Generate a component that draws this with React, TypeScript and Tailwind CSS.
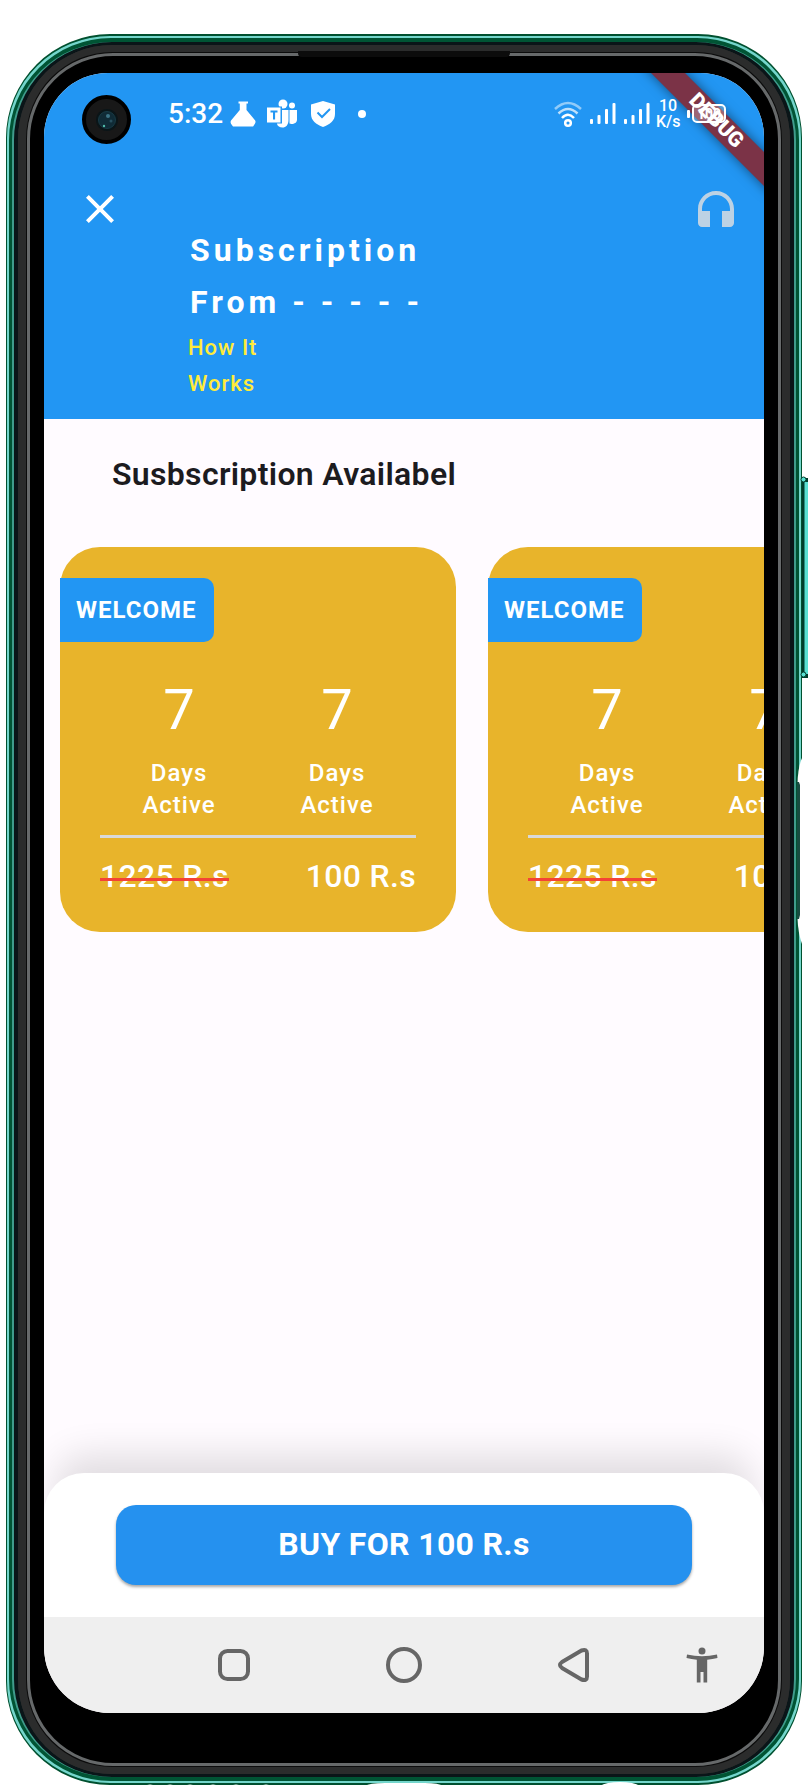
import React from "react";

function StatusBar() {
  return (
    <div className="relative z-10 flex h-[82px] shrink-0 items-center pl-[124px] pr-[37px] leading-none text-white">
      <span className="w-[62px] text-[28px] font-medium">5:32</span>
      <svg className="h-[26px] w-[26px]" viewBox="0 0 26 26" fill="currentColor" aria-hidden="true">
        <path d="M8.500 0.500h9.500v2h-1.500v6.500l8.700 10.500q.8 1.500-.3 3.200l-1.800 2.800H3l-2-2.800q-1-1.700 0-3.200L9.800 9V2.500H8.500z" />
      </svg>
      <svg className="ml-[11px] h-[30px] w-[30px]" viewBox="0 0 30 30" fill="currentColor" aria-hidden="true">
        <circle cx="16" cy="5" r="4.500" />
        <circle cx="25" cy="6.500" r="3" />
        <path d="M22.500 11H30v9.500c0 3-2.500 4.500-5.500 4.500q-1.300 0-2-.4z" />
        <path d="M11 11h10.500v10c0 5-2.800 7.500-6 7.500-3 0-4.800-1.200-5.500-3.500z" />
        <path d="M-.5 7.500h15.500v17H-.5z" fill="#2296f3" />
        <path d="M0 8.500h13.500v15H0z" />
        <path d="M3.500 11.500h7v2h-2.400v7H6v-7H3.500z" fill="#2296f3" />
      </svg>
      <svg className="ml-[13px] h-[28px] w-[26px]" viewBox="0 0 26 28" fill="currentColor" aria-hidden="true">
        <path d="M13 1 25 4.500V14c0 6.500-5 10.500-12 13C6 24.500 1 20.500 1 14V4.500z" />
        <path d="M7.500 12.500l4.500 4.500 8-8" fill="none" stroke="#2296f3" strokeWidth="2" />
      </svg>
      <span className="ml-[22px] h-2 w-2 rounded-full bg-white" />
      <div className="ml-auto flex items-center">
        <svg className="h-[28px] w-[28px]" viewBox="0 0 28 28" fill="none" stroke="currentColor" strokeWidth="2.500" aria-hidden="true">
          <path d="M1 9q13-12 26 0" opacity=".5" />
          <path d="M4.500 13.500q9.500-9 19 0" opacity=".7" />
          <path d="M8 18q6-6.500 12 0" />
          <circle cx="14" cy="23" r="2.800" />
        </svg>
        <Signal />
        <Signal />
        <div className="ml-[6px] w-[24px] text-center text-[16px] font-medium leading-4">
          10
          <br />
          K/s
        </div>
        <svg className="ml-[7px] h-[22px] w-[40px]" viewBox="0 0 40 22" aria-hidden="true">
          <rect x="0" y="7" width="3" height="8" rx="1" fill="white" />
          <rect x="6" y="2" width="32" height="17" rx="4" fill="rgba(255,255,255,.25)" stroke="white" strokeWidth="2" />
          <text x="22" y="16" textAnchor="middle" fontFamily="Roboto, sans-serif" fontSize="14" fontWeight="700" fill="white">
            100
          </text>
        </svg>
      </div>
    </div>
  );
}

function Signal() {
  return (
    <svg className="ml-[8px] h-[22px] w-[26px]" viewBox="0 0 26 22" fill="currentColor" aria-hidden="true">
      <rect x="0" y="16" width="3" height="5" rx="1" />
      <rect x="7.500" y="12" width="3" height="9" rx="1" />
      <rect x="15" y="6" width="3" height="15" rx="1" />
      <rect x="22.500" y="0" width="3" height="21" rx="1" />
    </svg>
  );
}

function Header() {
  return (
    <header className="h-[346px] shrink-0 bg-[#2296f3]">
      <StatusBar />
      <div className="flex items-start pt-[30px] pl-[32px] pr-[24px]">
        <button type="button" aria-label="Close" className="h-[48px] w-[48px] text-white">
          <svg viewBox="0 0 24 24" fill="currentColor" className="h-full w-full">
            <path d="M19 6.410 17.590 5 12 10.590 6.410 5 5 6.410 10.590 12 5 17.590 6.410 19 12 13.410 17.590 19 19 17.590 13.410 12z" />
          </svg>
        </button>
        <div className="ml-[64px] w-[250px] pt-[39px]">
          <h1 className="pl-[2px] text-[32px] font-bold leading-[52px] tracking-[4px] text-white">
            Subscription From&nbsp;-&nbsp;-&nbsp;-&nbsp;-&nbsp;-
          </h1>
          <a href="#how" className="mt-[2px] block w-[100px] text-[22px] font-medium leading-9 tracking-[1px] text-[#ffeb3b]">
            How It Works
          </a>
        </div>
        <button type="button" aria-label="Support" className="ml-auto h-[48px] w-[48px] text-[#bdd2e4]">
          <svg viewBox="0 0 24 24" fill="currentColor" className="h-full w-full">
            <path d="M12 3c-4.970 0-9 4.030-9 9v7c0 1.100.9 2 2 2h4v-8H5v-1c0-3.870 3.130-7 7-7s7 3.130 7 7v1h-4v8h4c1.100 0 2-.9 2-2v-7c0-4.970-4.030-9-9-9z" />
          </svg>
        </button>
      </div>
    </header>
  );
}

function Stat() {
  return (
    <div className="flex-1 text-center text-white">
      <div className="text-[56px] leading-[72px]">7</div>
      <div className="mt-[11px] text-[24px] font-medium leading-8 tracking-[1px]">
        Days
        <br />
        Active
      </div>
    </div>
  );
}

function PlanCard() {
  return (
    <article className="h-[385px] w-[396px] shrink-0 rounded-[40px] bg-[#e8b42b] pt-[31px]">
      <div className="flex h-[64px] w-[154px] items-center rounded-r-[10px] bg-[#2296f3] pl-[16px] text-[24px] font-bold tracking-[1px] text-white">
        WELCOME
      </div>
      <div className="mx-[40px] mt-[32px] flex border-b-[3px] border-[#d9d9d9] pb-[14px]">
        <Stat />
        <Stat />
      </div>
      <div className="mx-[40px] mt-[18px] flex justify-between text-[32px] font-medium leading-[40px] tracking-[0.01em] text-white">
        <s className="relative no-underline after:absolute after:inset-x-0 after:top-[22px] after:h-[3px] after:bg-[#f44336]">1225 R.s</s>
        <span>100 R.s</span>
      </div>
    </article>
  );
}

function NavBar() {
  return (
    <nav className="flex h-[96px] shrink-0 items-center justify-between bg-[#efefef] pl-[166px] pr-[38px] text-[#666666]">
      <button type="button" aria-label="Recent apps">
        <svg className="h-[48px] w-[48px]" viewBox="0 0 48 48" fill="none" stroke="currentColor" strokeWidth="4">
          <rect x="10" y="10" width="28" height="28" rx="7.500" />
        </svg>
      </button>
      <button type="button" aria-label="Home" className="ml-[74px]">
        <svg className="h-[48px] w-[48px]" viewBox="0 0 48 48" fill="none" stroke="currentColor" strokeWidth="4">
          <circle cx="24" cy="24" r="16" />
        </svg>
      </button>
      <button type="button" aria-label="Back" className="ml-[74px]">
        <svg className="h-[48px] w-[48px]" viewBox="0 0 48 48" fill="none" stroke="currentColor" strokeWidth="4" strokeLinejoin="round">
          <path d="M31.500 9.500 12 21q-4 3 0 6l19.500 11.500q5.500 2 5.500-3v-23q0-5-5.500-3z" />
        </svg>
      </button>
      <button type="button" aria-label="Accessibility" className="ml-[32px]">
        <svg className="h-[48px] w-[48px]" viewBox="0 0 48 48" fill="currentColor">
          <circle cx="24" cy="10" r="3.500" />
          <path d="M9 13.500q15 3.500 30 0l.5 3.500q-5 1.200-10.300 1.700V41.500h-3.700V31h-3v10.500h-3.700V18.700Q13.500 18.200 8.500 17z" />
        </svg>
      </button>
    </nav>
  );
}

function Screen() {
  return (
    <div className="relative flex min-w-0 flex-1 flex-col overflow-hidden rounded-t-[64px] rounded-b-[66px] bg-[#fffbff]">
      <Header />
      <main className="flex-1">
        <h2 className="pt-[35px] pl-[68px] text-[32px] font-semibold leading-[40px] tracking-[0.01em] text-[#1c1b1f]">
          Susbscription Availabel
        </h2>
        <div className="mt-[53px] flex gap-8 overflow-hidden pl-[16px]">
          <PlanCard />
          <PlanCard />
        </div>
      </main>
      <div className="h-[144px] shrink-0 rounded-t-[40px] bg-white px-[72px] pt-[32px] shadow-[0_-30px_36px_-12px_rgba(0,0,0,0.12)]">
        <button
          type="button"
          className="h-[80px] w-full rounded-[20px] bg-[#2591ef] pb-[2px] text-[32px] font-bold tracking-[0.01em] text-white shadow-[0_2px_3px_rgba(0,0,0,0.35)]"
        >
          BUY FOR 100 R.s
        </button>
      </div>
      <NavBar />
      <div className="absolute top-[22px] left-[38px] flex h-[49px] w-[49px] items-center justify-center rounded-full border-4 border-black bg-[#181818]">
        <svg className="h-[24px] w-[24px]" viewBox="0 0 24 24" aria-hidden="true">
          <circle cx="12" cy="12" r="11" fill="#0a1518" />
          <circle cx="12" cy="12" r="8.500" fill="#102b36" stroke="#173a45" />
          <circle cx="13" cy="8" r="2" fill="#3d7486" />
          <circle cx="9" cy="18" r="1.200" fill="#4fb9a8" />
          <circle cx="16" cy="13" r="1.500" fill="#28505f" />
        </svg>
      </div>
      <div className="absolute top-[36px] -right-[42px] flex h-[24px] w-[180px] rotate-45 items-center justify-center bg-[#7b3347] text-[21px] font-black text-white shadow-[0_0_12px_rgba(0,0,0,0.5)]">
        DEBUG
      </div>
    </div>
  );
}

export default function App() {
  return (
    <div className="relative flex min-h-screen flex-col overflow-hidden bg-white px-[6px] pt-[34px] pb-px font-[Roboto,sans-serif]">
      <div className="flex flex-1 flex-col rounded-[104px] border-x border-y-2 border-[#00502f] bg-[#74d6cc]">
        <div className="m-[2px] flex flex-1 flex-col rounded-[102px] border-x-[3px] border-y-4 border-[#005434] bg-[#3f9c8c] px-[2px]">
          <div className="flex flex-1 flex-col rounded-[98px] border-x-4 border-y-[3px] border-[#0a1518] bg-[#2b2c2c]">
            <div className="flex flex-1 flex-col rounded-[94px] border-x-8 border-y-[7px] border-[#2b2c2c] bg-[#0b0b0b] p-px">
              <div className="flex flex-1 flex-col rounded-[86px] border-[3px] border-[#66696a] bg-black px-[14px] pt-[17px] pb-[50px]">
                <Screen />
              </div>
            </div>
          </div>
        </div>
      </div>
      <div className="absolute top-[51px] left-1/2 h-[6px] w-[212px] -translate-x-1/2 rounded-b bg-[#0c0c0c]" />
      <svg className="absolute top-[476px] right-0 h-[480px] w-[14px]" viewBox="0 0 14 480" aria-hidden="true">
        <path d="M8 2h6v200H8z" fill="#003d2b" />
        <path d="M10.500 6H14v192h-3.500z" fill="#5ae0d2" />
        <circle cx="9.500" cy="3.500" r="2.500" fill="#5ae0d2" stroke="#003d2b" />
        <circle cx="9.500" cy="198.500" r="2.500" fill="#5ae0d2" stroke="#003d2b" />
        <path d="M8 282q-4 9-4.500 25v135q.5 15 4.500 26h6V282z" fill="white" />
        <path d="M3 306h2l1 3v130l-1 4H3z" fill="#174d41" />
      </svg>
      <svg className="absolute bottom-0 left-0 h-[4px] w-full" viewBox="0 0 808 4" preserveAspectRatio="none" fill="white" aria-hidden="true">
        <path d="M365 4q4-3 20-3h40q14 0 18 3zM600 4q6-4 20-4t20 4zM144 4q6-3 12 0zM164 4q6-3 12 0zM184 4q6-3 12 0zM207 4q6-3 12 0zM230 4q6-3 12 0zM260 4q6-3 12 0z" />
      </svg>
    </div>
  );
}
